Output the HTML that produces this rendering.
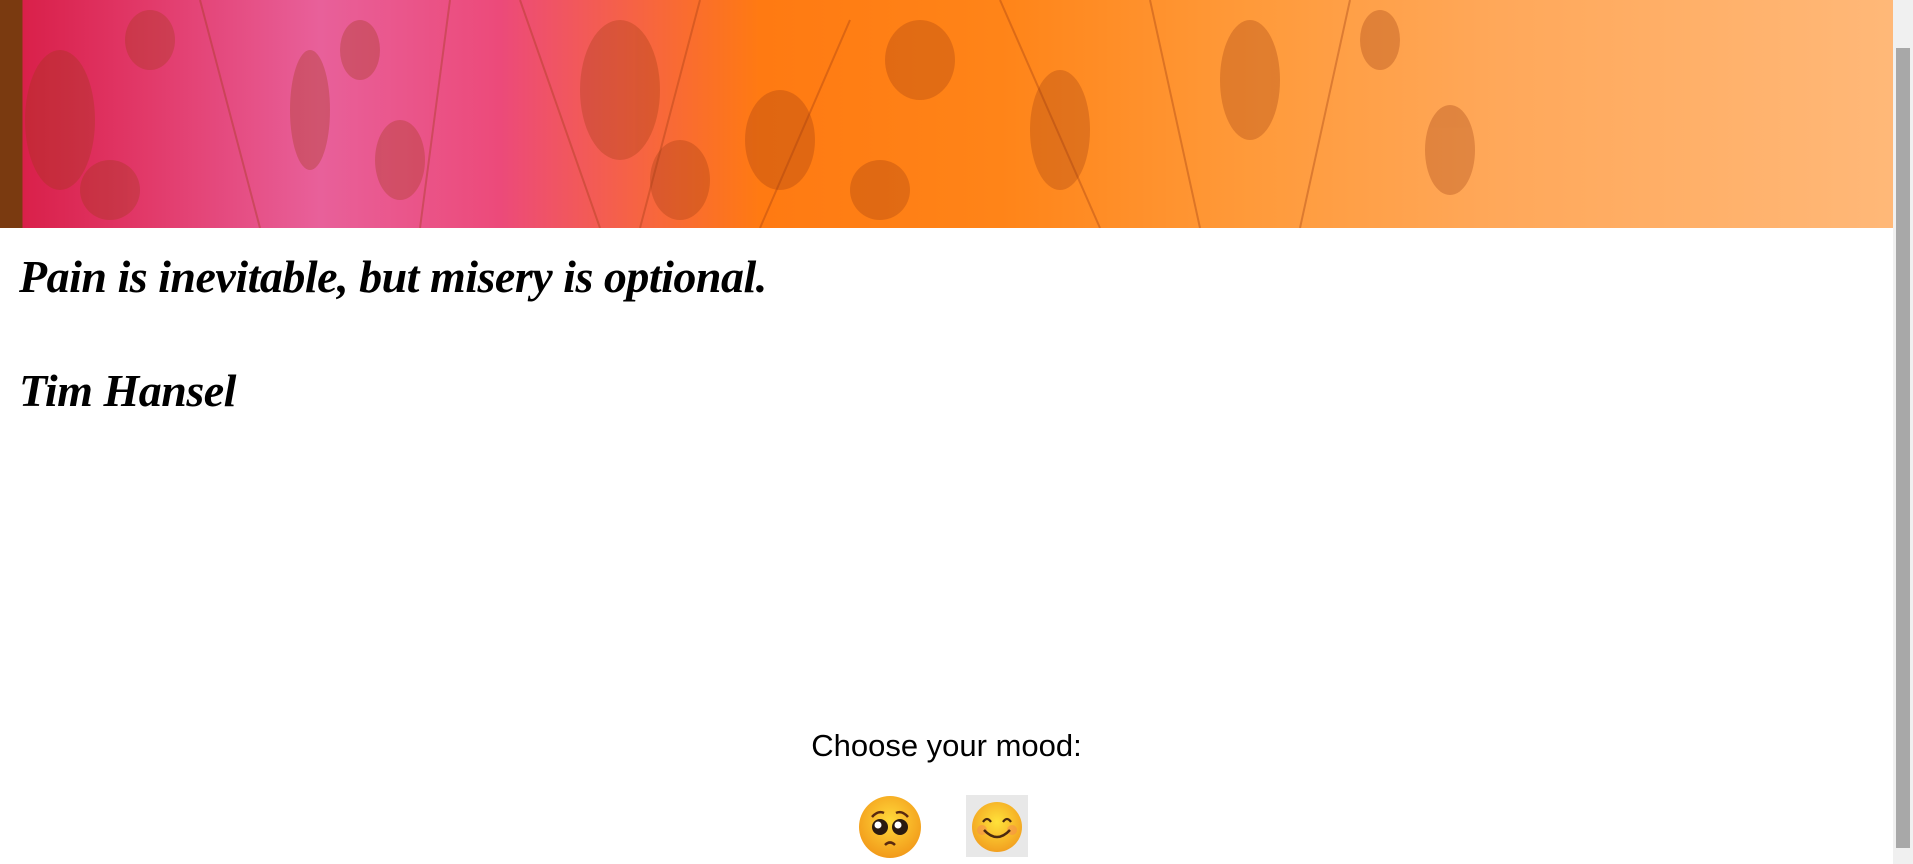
<!DOCTYPE html>
<html><head><meta charset="utf-8"><style>
html,body{margin:0;padding:0;width:1913px;height:864px;overflow:hidden;background:#fff;font-family:"Liberation Sans",sans-serif}
.hdr{position:absolute;left:0;top:0;width:1893px;height:228px;
background:linear-gradient(90deg,#7a3a10 0,#7a3a10 22px,#d9204a 23px,#e23a6a 150px,#e8609a 320px,#ec4a7a 500px,#ff7a12 760px,#ff8418 1000px,#ff9a3a 1250px,#ffa85a 1500px,#ffb878 1893px);overflow:hidden}
.hdr svg{position:absolute;left:0;top:0}
.sb{position:absolute;left:1893px;top:0;width:20px;height:864px;background:#f0f0f0}
.sb i{position:absolute;left:3px;top:48px;width:14px;height:800px;background:#a8a8a8}
.q{position:absolute;left:19px;font-family:"Liberation Serif",serif;font-style:italic;font-weight:bold;color:#000;font-size:46px;letter-spacing:-0.5px}
.m{position:absolute;left:0;width:1893px;top:728px;text-align:center;font-size:31px;color:#000}
</style></head><body>
<div class="hdr"><svg width="1893" height="228">
<g fill="#9a3a10" opacity="0.3">
<ellipse cx="60" cy="120" rx="35" ry="70"/><ellipse cx="150" cy="40" rx="25" ry="30"/><ellipse cx="110" cy="190" rx="30" ry="30"/>
<ellipse cx="310" cy="110" rx="20" ry="60"/><ellipse cx="400" cy="160" rx="25" ry="40"/><ellipse cx="360" cy="50" rx="20" ry="30"/>
<ellipse cx="620" cy="90" rx="40" ry="70"/><ellipse cx="680" cy="180" rx="30" ry="40"/><ellipse cx="780" cy="140" rx="35" ry="50"/>
<ellipse cx="920" cy="60" rx="35" ry="40"/><ellipse cx="1060" cy="130" rx="30" ry="60"/><ellipse cx="880" cy="190" rx="30" ry="30"/>
<ellipse cx="1250" cy="80" rx="30" ry="60"/><ellipse cx="1450" cy="150" rx="25" ry="45"/><ellipse cx="1380" cy="40" rx="20" ry="30"/>
</g>
<g stroke="#9a3a10" stroke-width="2" opacity="0.35" fill="none">
<path d="M520 0 L600 228M700 0 L640 228M850 20 L760 228M1000 0 L1100 228M1150 0 L1200 228M1350 0 L1300 228M200 0 L260 228M450 0 L420 228"/>
</g></svg></div>
<div class="q" style="top:250px">Pain is inevitable, but misery is optional.</div>
<div class="q" style="top:364px">Tim Hansel</div>
<div class="m">Choose your mood:</div>
<svg style="position:absolute;left:858px;top:795px" width="64" height="64" viewBox="0 0 64 64">
<defs><radialGradient id="g1" cx="50%" cy="40%" r="60%"><stop offset="0" stop-color="#ffd93a"/><stop offset="1" stop-color="#f29a1a"/></radialGradient></defs>
<circle cx="32" cy="32" r="31" fill="url(#g1)"/>
<path d="M14 22 Q20 15 26 18M50 22 Q44 15 38 18" stroke="#5a2a10" stroke-width="2.5" fill="none"/>
<circle cx="22" cy="32" r="8" fill="#2a1a10"/><circle cx="42" cy="32" r="8" fill="#2a1a10"/>
<circle cx="20" cy="30" r="3.5" fill="#fff"/><circle cx="40" cy="30" r="3.5" fill="#fff"/>
<path d="M27 50 Q32 45 37 50" stroke="#5a2a10" stroke-width="2.5" fill="none"/>
</svg>
<div style="position:absolute;left:966px;top:795px;width:62px;height:62px;background:#e8e8e8"></div>
<svg style="position:absolute;left:970px;top:800px" width="54" height="54" viewBox="0 0 54 54">
<defs><radialGradient id="g2" cx="50%" cy="40%" r="60%"><stop offset="0" stop-color="#ffe23a"/><stop offset="1" stop-color="#f2a020"/></radialGradient></defs>
<circle cx="27" cy="27" r="25" fill="url(#g2)"/>
<circle cx="12" cy="30" r="5" fill="#f58a50" opacity="0.5"/><circle cx="42" cy="30" r="5" fill="#f58a50" opacity="0.5"/>
<path d="M13 22 Q17 16 21 22M33 22 Q37 16 41 22" stroke="#4a2a10" stroke-width="2.2" fill="none"/>
<path d="M14 30 Q27 44 40 30" stroke="#4a2a10" stroke-width="2.5" fill="none"/>
</svg>
<div class="sb"><i></i></div>
</body></html>
